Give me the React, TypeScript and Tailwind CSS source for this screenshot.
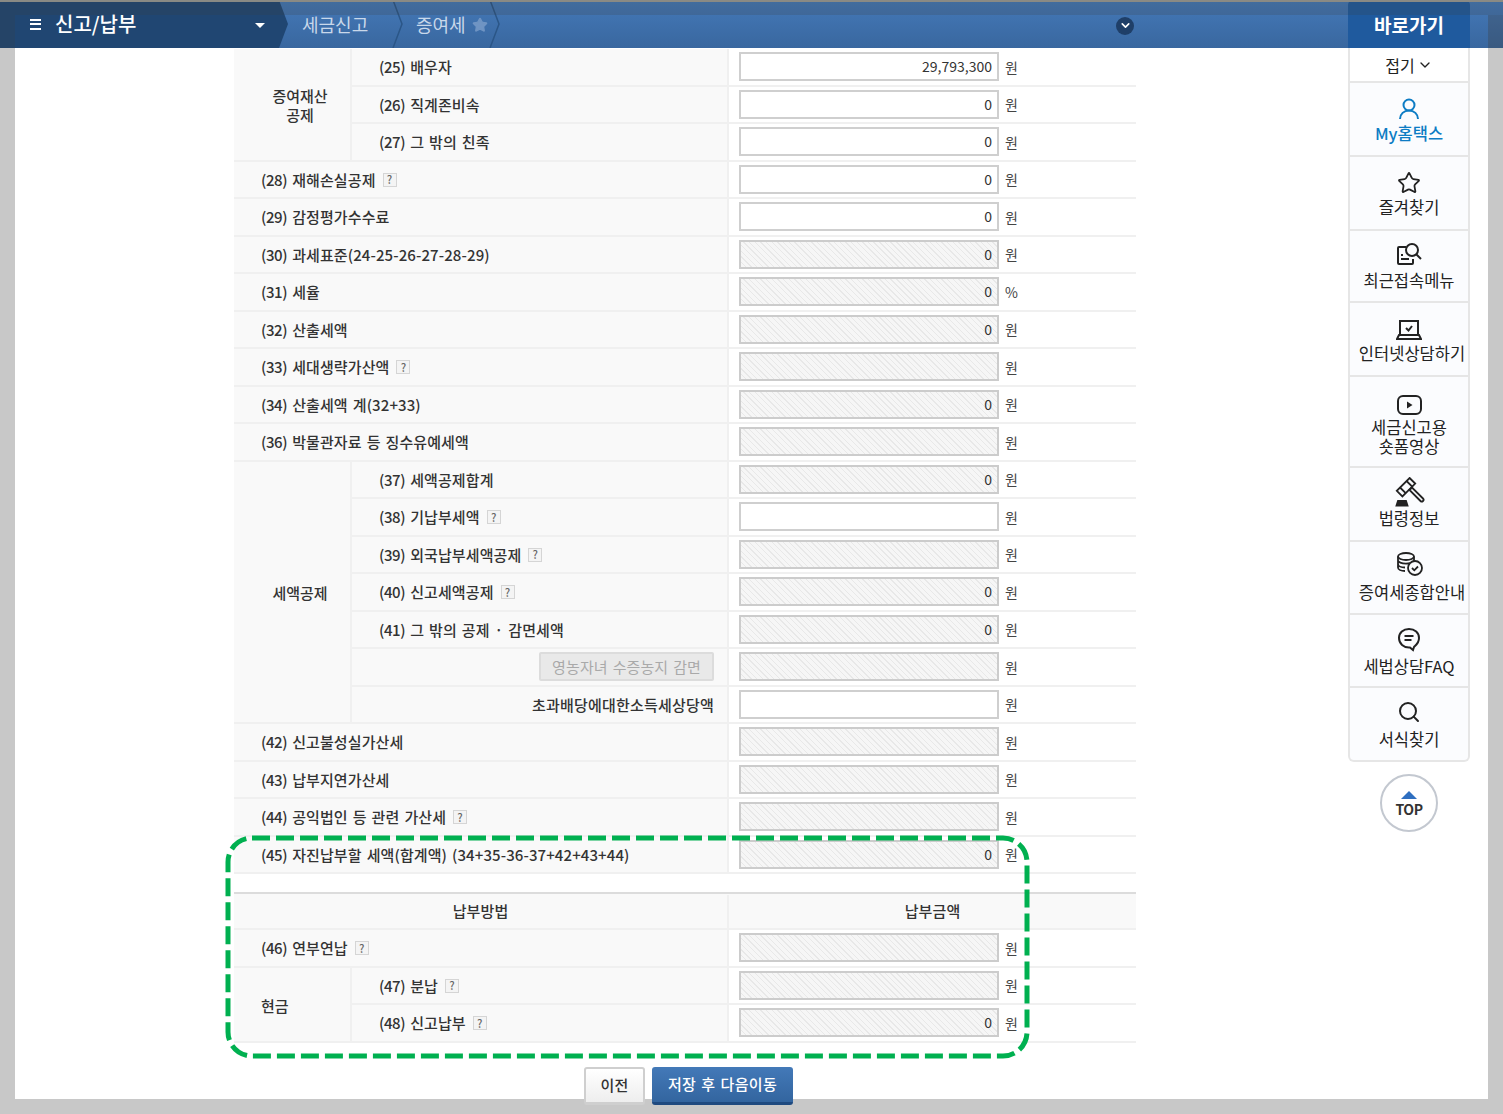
import { ChevronDown, Search, Star } from "lucide-react";

const hatch =
	"bg-[repeating-linear-gradient(45deg,#f6f6f6_0px,#f6f6f6_3px,#e8e8e8_3px,#e8e8e8_4px)]";

type Field = { value?: string; white?: boolean; unit?: string };

function Help() {
	return (
		<span className="ml-[7px] inline-flex h-[14px] w-[14px] items-center justify-center border border-[#d5d5d5] bg-[#f4f4f4] text-[11px] leading-none text-[#666]">
			?
		</span>
	);
}

function Value({ value, white, unit = "원" }: Field) {
	return (
		<div className="flex h-full w-[409px] shrink-0 items-center border-l-2 border-[#f0f0f0] bg-white pl-[10px]">
			<div
				className={`flex h-[29px] w-[260px] items-center justify-end border-2 pr-[5px] text-[14px] text-[#333] ${
					white ? "border-[#cfcfcf] bg-white" : `border-[#cccccc] ${hatch}`
				}`}
			>
				{value}
			</div>
			<span className="ml-[6px] pt-[1px] text-[14px] text-[#444]">{unit}</span>
		</div>
	);
}

function Row({ label, help, ...field }: Field & { label: string; help?: boolean }) {
	const num = label.slice(0, 4);
	return (
		<div className="flex h-[37.5px] border-b-2 border-[#f0f0f0]">
			<div className="flex flex-1 items-center whitespace-pre bg-[#f9f9f9] pl-[27px] pt-[1px] text-[15px] font-medium tracking-[0.1px] text-[#333] [word-spacing:1.5px]">
				<span className="tracking-[-0.4px]">{num}</span>
				{label.slice(4)}
				{help && <Help />}
			</div>
			<Value {...field} />
		</div>
	);
}

function Group({
	title,
	left,
	children,
}: {
	title: React.ReactNode;
	left?: boolean;
	children: React.ReactNode;
}) {
	return (
		<div className="flex">
			<div
				className={`flex w-[118px] shrink-0 items-center border-b-2 border-r-2 border-[#f0f0f0] bg-[#f9f9f9] pt-[2px] text-[15px] leading-[19px] font-medium text-[#333] ${
					left ? "pl-[27px]" : "justify-center pl-[16px] text-center"
				}`}
			>
				{title}
			</div>
			<div className="flex-1">{children}</div>
		</div>
	);
}

function UserIcon() {
	return (
		<svg width="22" height="22" viewBox="0 0 22 22" fill="none" stroke="#0d7cc4" strokeWidth="2">
			<circle cx="11" cy="7" r="5.500" />
			<path d="M2 21c0-5 4-8.500 9-8.500s9 3.500 9 8.500" />
		</svg>
	);
}

function DocSearchIcon() {
	return (
		<svg width="26" height="24" viewBox="0 0 26 24" fill="none" stroke="#222" strokeWidth="2">
			<path d="M10 5H3a1 1 0 0 0-1 1v15a1 1 0 0 0 1 1h13a1 1 0 0 0 1-1v-4" />
			<circle cx="16" cy="8" r="6" />
			<path d="M20.500 12.500 25 17" />
			<path d="M5 13h2M5 17h8" />
		</svg>
	);
}

function LaptopIcon() {
	return (
		<svg width="26" height="22" viewBox="0 0 26 22" fill="none" stroke="#222" strokeWidth="2">
			<path d="M4 16V2h18v14" />
			<path d="M1 20h24l-2-4H3z" />
			<path d="m10 9 2.500 2.500L16 7" />
		</svg>
	);
}

function PlayIcon() {
	return (
		<svg width="25" height="20" viewBox="0 0 25 20" fill="none" stroke="#222" strokeWidth="2">
			<rect x="1" y="1" width="23" height="18" rx="5" />
			<path d="M10 6.500v7l5.500-3.500z" fill="#222" stroke="none" />
		</svg>
	);
}

function GavelIcon() {
	return (
		<svg width="32" height="30" viewBox="0 0 32 30" fill="none" stroke="#222" strokeWidth="1.800">
			<path d="M16.600 1 22.200 6.600 9.400 19.400 3.800 13.800z" fill="#fbfcfe" />
			<path d="M13.500 4 19.200 9.700M7 10.500l5.700 5.700" />
			<path d="m16.500 13 2.500-2.500 11 11c.8.800.8 1.700 0 2.500s-1.700.8-2.500 0z" />
			<path d="M5 24h8l1.500 4.500H3.500z" fill="#222" />
		</svg>
	);
}

function CoinsIcon() {
	return (
		<svg width="27" height="24" viewBox="0 0 27 24" fill="none" stroke="#222" strokeWidth="1.800">
			<ellipse cx="10" cy="4.500" rx="8" ry="3.500" />
			<path d="M2 4.500v11c0 2 3 3.500 7 3.500M18 4.500V9M2 8.200c0 2 3.500 3.500 8 3.500 1.500 0 3-.2 4-.5M2 12c0 2 3 3.500 7 3.500" />
			<circle cx="19" cy="16" r="7" />
			<path d="m16 16 2.300 2.300L22 14.500" />
		</svg>
	);
}

function ChatIcon() {
	return (
		<svg width="24" height="25" viewBox="0 0 24 25" fill="none" stroke="#222" strokeWidth="2">
			<path d="M12 2c5.800 0 10 3.800 10 9s-3 7-5 9l-1 3-3-2.500C6.500 21 2 16.500 2 11c0-5.200 4.200-9 10-9z" />
			<path d="M7.500 9h9M7.500 13h7" />
		</svg>
	);
}

const sideItems = [
	{ h: "h-[74px]", pt: "pt-[14px]", mt: "mt-[3px]", icon: <UserIcon />, label: "My홈택스", blue: true },
	{ h: "h-[74px]", pt: "pt-[14px]", mt: "mt-[3px]", icon: <Star size={24} color="#222" strokeWidth={1.8} />, label: "즐겨찾기" },
	{ h: "h-[72px]", pt: "pt-[11px]", mt: "mt-[5px]", icon: <DocSearchIcon />, label: "최근접속메뉴" },
	{ h: "h-[74px]", pt: "pt-[15px]", mt: "mt-[2px] ml-[6px]", icon: <LaptopIcon />, label: "인터넷상담하기" },
	{ h: "h-[91px]", pt: "pt-[16px]", mt: "mt-[1px]", icon: <PlayIcon />, label: "세금신고용\n숏폼영상" },
	{ h: "h-[74px]", pt: "pt-[12px]", mt: "mt-[5px]", icon: <GavelIcon />, label: "법령정보" },
	{ h: "h-[73px]", pt: "pt-[10px]", mt: "mt-[7px] ml-[6px]", icon: <CoinsIcon />, label: "증여세종합안내" },
	{ h: "h-[73px]", pt: "pt-[12px]", mt: "mt-[6px]", icon: <ChatIcon />, label: "세법상담FAQ" },
	{ h: "h-[72px]", pt: "pt-[12px]", mt: "mt-[6px]", icon: <Search size={24} color="#222" strokeWidth={2} />, label: "서식찾기" },
];

function Sidebar() {
	return (
		<aside className="ml-[212px] w-[122px] shrink-0">
			<div className="flex h-[35px] items-center justify-center gap-[2px] border-x-2 border-b-2 border-[#e6e6e6] bg-white text-[16px] text-[#222]">
				접기 <ChevronDown size={16} />
			</div>
			<div className="overflow-hidden rounded-b-[6px] border-x-2 border-b-2 border-[#e6e6e6] bg-[#fbfcfe]">
				{sideItems.map((item) => (
					<div
						key={item.label}
						className={`flex flex-col items-center border-b-2 border-[#e6e6e6] text-center text-[16.500px] leading-[19px] whitespace-nowrap last:border-b-0 ${item.h} ${item.pt} ${
							item.blue ? "font-medium text-[#0d7cc4]" : "text-[#222]"
						}`}
					>
						<div className="flex h-[24px] items-center justify-center">{item.icon}</div>
						<div className={`whitespace-pre-line ${item.mt}`}>{item.label}</div>
					</div>
				))}
			</div>
			<div className="mx-auto mt-[12px] flex h-[58px] w-[58px] flex-col items-center justify-center rounded-full border-2 border-[#c3c8d0] bg-white">
				<div className="h-0 w-0 border-x-[8px] border-b-[8px] border-x-transparent border-b-[#2f6fc0]" />
				<span className="mt-[2px] -mb-[3px] text-[14px] leading-[17px] font-bold tracking-[-0.5px] text-[#333]">TOP</span>
			</div>
		</aside>
	);
}

function Crumb({ label, w, children }: { label: string; w: string; children?: React.ReactNode }) {
	return (
		<div className={`relative flex h-full items-center pt-[1px] text-[18px] text-[#c9d8ea] ${w}`}>
			{label}
			{children}
			<svg className="absolute right-0 top-0" width="11" height="48" fill="none" stroke="#2b5687" strokeWidth="1.500">
				<path d="M1 0 10 24 1 48" />
			</svg>
		</div>
	);
}

function Header() {
	return (
		<header className="relative flex h-[48px] bg-gradient-to-b from-[#4479b8] to-[#39679f] text-white">
			<div className="flex h-full w-[288px] shrink-0 items-center bg-[#204672] pl-[30px] [clip-path:polygon(0_0,279px_0,288px_24px,279px_48px,0_48px)]">
				<div className="flex w-[11px] flex-col gap-[2.500px]">
					<div className="h-[2px] bg-white" />
					<div className="h-[2px] bg-white" />
					<div className="h-[2px] bg-white" />
				</div>
				<span className="ml-[14px] text-[20px] font-medium">신고/납부</span>
				<span className="ml-[119px] mt-[3px] h-0 w-0 border-x-[5px] border-t-[5px] border-x-transparent border-t-white" />
			</div>
			<div className="flex h-full flex-1 items-center">
				<Crumb label="세금신고" w="w-[115px] pl-[14px]" />
				<Crumb label="증여세" w="w-[97px] pl-[13px]">
					<Star size={16} className="ml-[6px] fill-[#6f94c3] text-[#6f94c3]" />
				</Crumb>
				<div className="ml-[616px] mt-[3px] flex h-[18px] w-[18px] items-center justify-center rounded-full bg-[#1f3f68]">
					<ChevronDown size={13} strokeWidth={3} />
				</div>
			</div>
			<div className="mr-[33px] flex h-full w-[122px] shrink-0 items-center justify-center rounded-t-[5px] bg-[#1f5a9e] pt-[3px] text-[19px] font-bold">
				바로가기
			</div>
			<div className="pointer-events-none absolute inset-x-0 top-0 h-[15px] border-t-2 border-[#8a8a84] bg-[#3a3a3a]/20" />
			<div className="pointer-events-none absolute bottom-0 left-0 top-[15px] w-[15px] bg-[#3a3a3a]/20" />
			<div className="pointer-events-none absolute bottom-0 right-0 top-[15px] w-[15px] bg-[#3a3a3a]/30" />
		</header>
	);
}

export default function App() {
	return (
		<div
			className="relative h-[1114px] w-full overflow-hidden bg-[#c8c8c8]"
			style={{ fontFamily: '"Noto Sans CJK KR", "Liberation Sans", sans-serif' }}
		>
			<Header />
			<main className="mx-[15px] flex h-[1051px] bg-white">
				<div className="ml-[219px] w-[902px] shrink-0 pt-[1px]">
					<Group title={<>증여재산<br />공제</>}>
						<Row label="(25) 배우자" value="29,793,300" white />
						<Row label="(26) 직계존비속" value="0" white />
						<Row label="(27) 그 밖의 친족" value="0" white />
					</Group>
					<Row label="(28) 재해손실공제" help value="0" white />
					<Row label="(29) 감정평가수수료" value="0" white />
					<Row label="(30) 과세표준(24-25-26-27-28-29)" value="0" />
					<Row label="(31) 세율" value="0" unit="%" />
					<Row label="(32) 산출세액" value="0" />
					<Row label="(33) 세대생략가산액" help />
					<Row label="(34) 산출세액 계(32+33)" value="0" />
					<Row label="(36) 박물관자료 등 징수유예세액" />
					<Group title="세액공제">
						<Row label="(37) 세액공제합계" value="0" />
						<Row label="(38) 기납부세액" help white />
						<Row label="(39) 외국납부세액공제" help />
						<Row label="(40) 신고세액공제" help value="0" />
						<Row label="(41) 그 밖의 공제 · 감면세액" value="0" />
						<div className="flex h-[37.5px] border-b-2 border-[#f0f0f0]">
							<div className="flex flex-1 items-center justify-end bg-[#f9f9f9] pr-[13px]">
								<span className="flex h-[29px] items-center rounded-[2px] border-2 border-[#dcdcdc] bg-[#e9e9e9] px-[11px] text-[15px] tracking-[0.1px] text-[#a9a9a9] [word-spacing:1.500px]">
									영농자녀 수증농지 감면
								</span>
							</div>
							<Value />
						</div>
						<div className="flex h-[37.5px] border-b-2 border-[#f0f0f0]">
							<div className="flex flex-1 items-center justify-end bg-[#f9f9f9] pr-[13px] pt-[1px] text-[15px] font-medium tracking-[0.2px] text-[#333]">
								초과배당에대한소득세상당액
							</div>
							<Value white />
						</div>
					</Group>
					<Row label="(42) 신고불성실가산세" />
					<Row label="(43) 납부지연가산세" />
					<Row label="(44) 공익법인 등 관련 가산세" help />
					<div className="border-b-2 border-[#dcdcdc]">
						<div className="-mb-[2px]">
							<Row label="(45) 자진납부할 세액(합계액) (34+35-36-37+42+43+44)" value="0" />
						</div>
					</div>
					<div className="mt-[18px] flex h-[38px] border-y-2 border-t-[#dcdcdc] border-b-[#f0f0f0] bg-[#f9f9f9] pt-[1px] text-[15px] font-medium tracking-[0.1px] text-[#333]">
						<div className="flex flex-1 items-center justify-center">납부방법</div>
						<div className="flex w-[409px] items-center justify-center border-l-2 border-[#f0f0f0]">납부금액</div>
					</div>
					<Row label="(46) 연부연납" help />
					<div className="border-b-2 border-[#d8d8d8]">
						<div className="-mb-[2px]">
							<Group left title="현금">
								<Row label="(47) 분납" help />
								<Row label="(48) 신고납부" help value="0" />
							</Group>
						</div>
					</div>
					<div className="mt-[24px] flex gap-[7px] pl-[350px]">
						<button className="h-[38px] w-[61px] rounded-[3px] border-2 border-b-[3px] border-[#cfcfcf] bg-gradient-to-b from-white to-[#eeeeee] text-[15px] font-medium tracking-[0.2px] text-[#333]">
							이전
						</button>
						<button className="h-[38px] w-[141px] rounded-[3px] border-b-[3px] border-[#1f4a80] bg-gradient-to-b from-[#4379b8] to-[#33659f] text-[15px] font-medium tracking-[0.3px] text-white [word-spacing:1.500px]">
							저장 후 다음이동
						</button>
					</div>
				</div>
				<Sidebar />
			</main>
			<svg className="pointer-events-none absolute left-[224px] top-[835px]" width="808" height="226" fill="none">
				<rect x="4" y="3" width="799" height="218" rx="24" stroke="#00b050" strokeWidth="5" strokeDasharray="18 6" />
			</svg>
		</div>
	);
}
